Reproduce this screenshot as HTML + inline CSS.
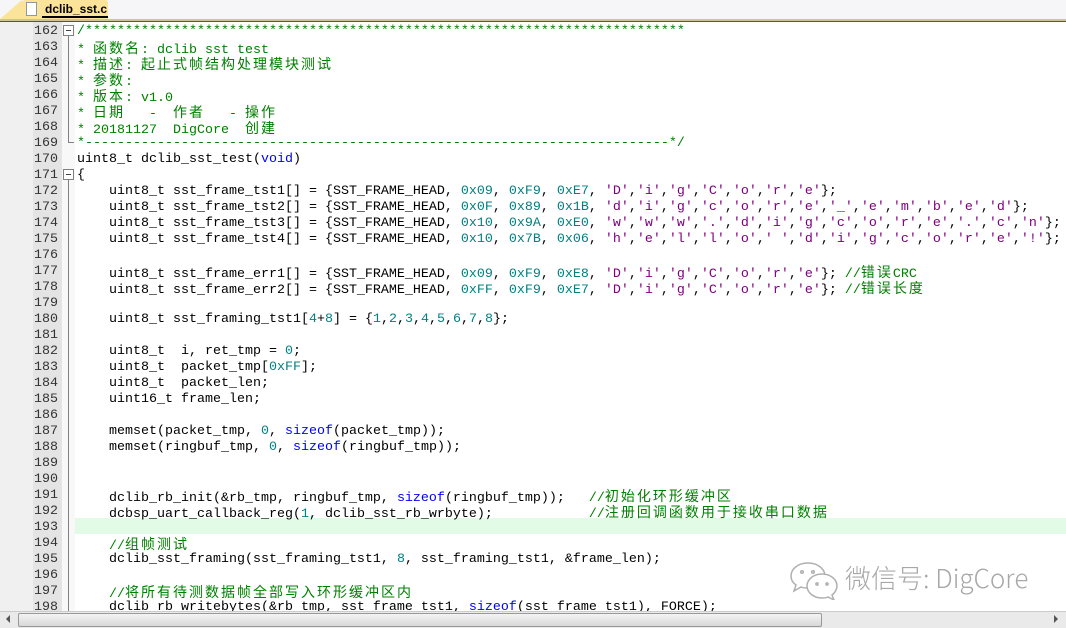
<!DOCTYPE html>
<html><head><meta charset="utf-8"><style>
html,body{margin:0;padding:0;width:1066px;height:627px;overflow:hidden;background:#fff;}
#tabbar{position:absolute;left:0;top:0;width:1066px;height:19px;background:#f6f6f8;}
#tab{position:absolute;left:22px;top:0;width:86px;height:19px;background:#fbe39a;border-radius:3px 3px 0 0;}
#tab .t{position:absolute;left:23px;top:2px;font:bold 12px "Liberation Sans",sans-serif;color:#000;}
#tab .u{position:absolute;left:20px;top:16px;width:66px;height:2px;background:#000;}
#tab .ic{position:absolute;left:4px;top:2px;width:9px;height:12px;border:1px solid #8899aa;background:#fff;}
#tri{position:absolute;left:0;top:0;width:0;height:0;border-left:22px solid transparent;border-bottom:19px solid #fbe39a;}
#sep1{position:absolute;left:0;top:19px;width:1066px;height:2px;background:#cdc59a;}
#sep2{position:absolute;left:0;top:21px;width:1066px;height:1px;background:#5a5448;}
#lm{position:absolute;left:0;top:22px;width:33px;height:589px;background:#f0f0f0;}
#ln{position:absolute;left:33px;top:22px;width:29px;height:589px;background:#e4e4e4;}
#fold{position:absolute;left:62px;top:22px;width:13px;height:589px;background:#f8f8f8;}
#hl{position:absolute;left:75px;top:518px;width:991px;height:16px;background:#e1fbe6;}
.row{position:absolute;left:0;height:16px;width:1066px;font:13.33px/16px "Liberation Mono",monospace;white-space:pre;}
.n{position:absolute;top:2px;left:20px;width:38px;text-align:right;color:#333;}
.x{position:absolute;top:2px;left:77px;color:#000;}
.g{color:#008000}.b{color:#0000ff}.k{color:#008080}.p{color:#800080}
.c{font-family:"Noto Sans CJK SC","WenQuanYi Zen Hei",sans-serif;font-size:14px;letter-spacing:2px;}
.fb{position:absolute;left:63px;width:9px;height:9px;border:1px solid #808080;background:#fff;}
.fb:after{content:"";position:absolute;left:2px;top:4px;width:5px;height:1px;background:#404040;}
.vl{position:absolute;left:68px;width:1px;background:#808080;}
#sb{position:absolute;left:0;top:611px;width:1066px;height:16px;background:#eaeaea;border-top:1px solid #ccc;}
#thumb{position:absolute;left:18px;top:613px;width:802px;height:12px;background:linear-gradient(#f4f4f4,#d8d8d8);border:1px solid #999;border-radius:2px;}
#wm{position:absolute;left:845px;top:562px;font:300 26px "Noto Sans CJK SC","Liberation Sans",sans-serif;color:#a8a8a8;line-height:32px;}
</style></head><body>
<div id="tabbar"></div><div id="tri"></div>
<div id="tab"><div class="ic"></div><div class="t">dclib_sst.c</div><div class="u"></div></div>
<div id="sep1"></div><div id="sep2"></div>
<div id="lm"></div><div id="ln"></div><div id="fold"></div><div id="hl"></div>
<div class="fb" style="top:25px"></div>
<div class="vl" style="top:36px;height:107px"></div>
<div style="position:absolute;left:68px;top:142px;width:6px;height:1px;background:#808080"></div>
<div class="fb" style="top:169px"></div>
<div class="vl" style="top:180px;height:431px"></div>

<div class="row" style="top:22px"><span class="n">162</span><span class="x g">/***************************************************************************</span></div>
<div class="row" style="top:38px"><span class="n">163</span><span class="x g">* <span class="c">函数名</span>: dclib sst test</span></div>
<div class="row" style="top:54px"><span class="n">164</span><span class="x g">* <span class="c">描述</span>: <span class="c">起止式帧结构处理模块测试</span></span></div>
<div class="row" style="top:70px"><span class="n">165</span><span class="x g">* <span class="c">参数</span>:</span></div>
<div class="row" style="top:86px"><span class="n">166</span><span class="x g">* <span class="c">版本</span>: v1.0</span></div>
<div class="row" style="top:102px"><span class="n">167</span><span class="x g">* <span class="c">日期</span>   -  <span class="c">作者</span>   - <span class="c">操作</span></span></div>
<div class="row" style="top:118px"><span class="n">168</span><span class="x g">* 20181127  DigCore  <span class="c">创建</span></span></div>
<div class="row" style="top:134px"><span class="n">169</span><span class="x g">*-------------------------------------------------------------------------*/</span></div>
<div class="row" style="top:150px"><span class="n">170</span><span class="x">uint8_t dclib_sst_test(<span class="b">void</span>)</span></div>
<div class="row" style="top:166px"><span class="n">171</span><span class="x">{</span></div>
<div class="row" style="top:182px"><span class="n">172</span><span class="x">    uint8_t sst_frame_tst1[] = {SST_FRAME_HEAD, <span class="k">0x09</span>, <span class="k">0xF9</span>, <span class="k">0xE7</span>, <span class="p">'D'</span>,<span class="p">'i'</span>,<span class="p">'g'</span>,<span class="p">'C'</span>,<span class="p">'o'</span>,<span class="p">'r'</span>,<span class="p">'e'</span>};</span></div>
<div class="row" style="top:198px"><span class="n">173</span><span class="x">    uint8_t sst_frame_tst2[] = {SST_FRAME_HEAD, <span class="k">0x0F</span>, <span class="k">0x89</span>, <span class="k">0x1B</span>, <span class="p">'d'</span>,<span class="p">'i'</span>,<span class="p">'g'</span>,<span class="p">'c'</span>,<span class="p">'o'</span>,<span class="p">'r'</span>,<span class="p">'e'</span>,<span class="p">'_'</span>,<span class="p">'e'</span>,<span class="p">'m'</span>,<span class="p">'b'</span>,<span class="p">'e'</span>,<span class="p">'d'</span>};</span></div>
<div class="row" style="top:214px"><span class="n">174</span><span class="x">    uint8_t sst_frame_tst3[] = {SST_FRAME_HEAD, <span class="k">0x10</span>, <span class="k">0x9A</span>, <span class="k">0xE0</span>, <span class="p">'w'</span>,<span class="p">'w'</span>,<span class="p">'w'</span>,<span class="p">'.'</span>,<span class="p">'d'</span>,<span class="p">'i'</span>,<span class="p">'g'</span>,<span class="p">'c'</span>,<span class="p">'o'</span>,<span class="p">'r'</span>,<span class="p">'e'</span>,<span class="p">'.'</span>,<span class="p">'c'</span>,<span class="p">'n'</span>};</span></div>
<div class="row" style="top:230px"><span class="n">175</span><span class="x">    uint8_t sst_frame_tst4[] = {SST_FRAME_HEAD, <span class="k">0x10</span>, <span class="k">0x7B</span>, <span class="k">0x06</span>, <span class="p">'h'</span>,<span class="p">'e'</span>,<span class="p">'l'</span>,<span class="p">'l'</span>,<span class="p">'o'</span>,<span class="p">' '</span>,<span class="p">'d'</span>,<span class="p">'i'</span>,<span class="p">'g'</span>,<span class="p">'c'</span>,<span class="p">'o'</span>,<span class="p">'r'</span>,<span class="p">'e'</span>,<span class="p">'!'</span>};</span></div>
<div class="row" style="top:246px"><span class="n">176</span></div>
<div class="row" style="top:262px"><span class="n">177</span><span class="x">    uint8_t sst_frame_err1[] = {SST_FRAME_HEAD, <span class="k">0x09</span>, <span class="k">0xF9</span>, <span class="k">0xE8</span>, <span class="p">'D'</span>,<span class="p">'i'</span>,<span class="p">'g'</span>,<span class="p">'C'</span>,<span class="p">'o'</span>,<span class="p">'r'</span>,<span class="p">'e'</span>}; <span class="g">//<span class="c">错误</span>CRC</span></span></div>
<div class="row" style="top:278px"><span class="n">178</span><span class="x">    uint8_t sst_frame_err2[] = {SST_FRAME_HEAD, <span class="k">0xFF</span>, <span class="k">0xF9</span>, <span class="k">0xE7</span>, <span class="p">'D'</span>,<span class="p">'i'</span>,<span class="p">'g'</span>,<span class="p">'C'</span>,<span class="p">'o'</span>,<span class="p">'r'</span>,<span class="p">'e'</span>}; <span class="g">//<span class="c">错误长度</span></span></span></div>
<div class="row" style="top:294px"><span class="n">179</span></div>
<div class="row" style="top:310px"><span class="n">180</span><span class="x">    uint8_t sst_framing_tst1[<span class="k">4</span>+<span class="k">8</span>] = {<span class="k">1</span>,<span class="k">2</span>,<span class="k">3</span>,<span class="k">4</span>,<span class="k">5</span>,<span class="k">6</span>,<span class="k">7</span>,<span class="k">8</span>};</span></div>
<div class="row" style="top:326px"><span class="n">181</span></div>
<div class="row" style="top:342px"><span class="n">182</span><span class="x">    uint8_t  i, ret_tmp = <span class="k">0</span>;</span></div>
<div class="row" style="top:358px"><span class="n">183</span><span class="x">    uint8_t  packet_tmp[<span class="k">0xFF</span>];</span></div>
<div class="row" style="top:374px"><span class="n">184</span><span class="x">    uint8_t  packet_len;</span></div>
<div class="row" style="top:390px"><span class="n">185</span><span class="x">    uint16_t frame_len;</span></div>
<div class="row" style="top:406px"><span class="n">186</span></div>
<div class="row" style="top:422px"><span class="n">187</span><span class="x">    memset(packet_tmp, <span class="k">0</span>, <span class="b">sizeof</span>(packet_tmp));</span></div>
<div class="row" style="top:438px"><span class="n">188</span><span class="x">    memset(ringbuf_tmp, <span class="k">0</span>, <span class="b">sizeof</span>(ringbuf_tmp));</span></div>
<div class="row" style="top:454px"><span class="n">189</span></div>
<div class="row" style="top:470px"><span class="n">190</span></div>
<div class="row" style="top:486px"><span class="n">191</span><span class="x">    dclib_rb_init(&amp;rb_tmp, ringbuf_tmp, <span class="b">sizeof</span>(ringbuf_tmp));   <span class="g">//<span class="c">初始化环形缓冲区</span></span></span></div>
<div class="row" style="top:502px"><span class="n">192</span><span class="x">    dcbsp_uart_callback_reg(<span class="k">1</span>, dclib_sst_rb_wrbyte);            <span class="g">//<span class="c">注册回调函数用于接收串口数据</span></span></span></div>
<div class="row" style="top:518px"><span class="n">193</span></div>
<div class="row" style="top:534px"><span class="n">194</span><span class="x">    <span class="g">//<span class="c">组帧测试</span></span></span></div>
<div class="row" style="top:550px"><span class="n">195</span><span class="x">    dclib_sst_framing(sst_framing_tst1, <span class="k">8</span>, sst_framing_tst1, &amp;frame_len);</span></div>
<div class="row" style="top:566px"><span class="n">196</span></div>
<div class="row" style="top:582px"><span class="n">197</span><span class="x">    <span class="g">//<span class="c">将所有待测数据帧全部写入环形缓冲区内</span></span></span></div>
<div class="row" style="top:598px"><span class="n">198</span><span class="x">    dclib_rb_writebytes(&amp;rb_tmp, sst_frame_tst1, <span class="b">sizeof</span>(sst_frame_tst1), FORCE);</span></div>

<svg style="position:absolute;left:788px;top:560px" width="56" height="40" viewBox="0 0 56 40">
<g fill="none" stroke="#b0b0b0" stroke-width="1.5">
<path d="M20 3C10 3 3 9 3 16c0 4 2 7 5 9l-2 6 7-4c2 1 5 1 7 1"/>
<path d="M20 3c9 0 16 5 17 12"/>
<path d="M34 14c-9 0-15 6-15 12s6 12 15 12c2 0 4 0 6-1l6 3-2-5c3-2 5-6 5-9 0-7-7-12-15-12z"/>
<circle cx="14" cy="12" r="1.3"/><circle cx="25" cy="12" r="1.3"/>
<circle cx="29" cy="24" r="1.1"/><circle cx="39" cy="24" r="1.1"/>
</g></svg>
<div id="wm">微信号: DigCore</div>

<div id="sb"></div>
<div style="position:absolute;left:6px;top:615px;width:0;height:0;border-top:4px solid transparent;border-bottom:4px solid transparent;border-right:4px solid #555"></div>
<div id="thumb"></div>
<div style="position:absolute;left:1054px;top:615px;width:0;height:0;border-top:4px solid transparent;border-bottom:4px solid transparent;border-left:4px solid #555"></div>
</body></html>
